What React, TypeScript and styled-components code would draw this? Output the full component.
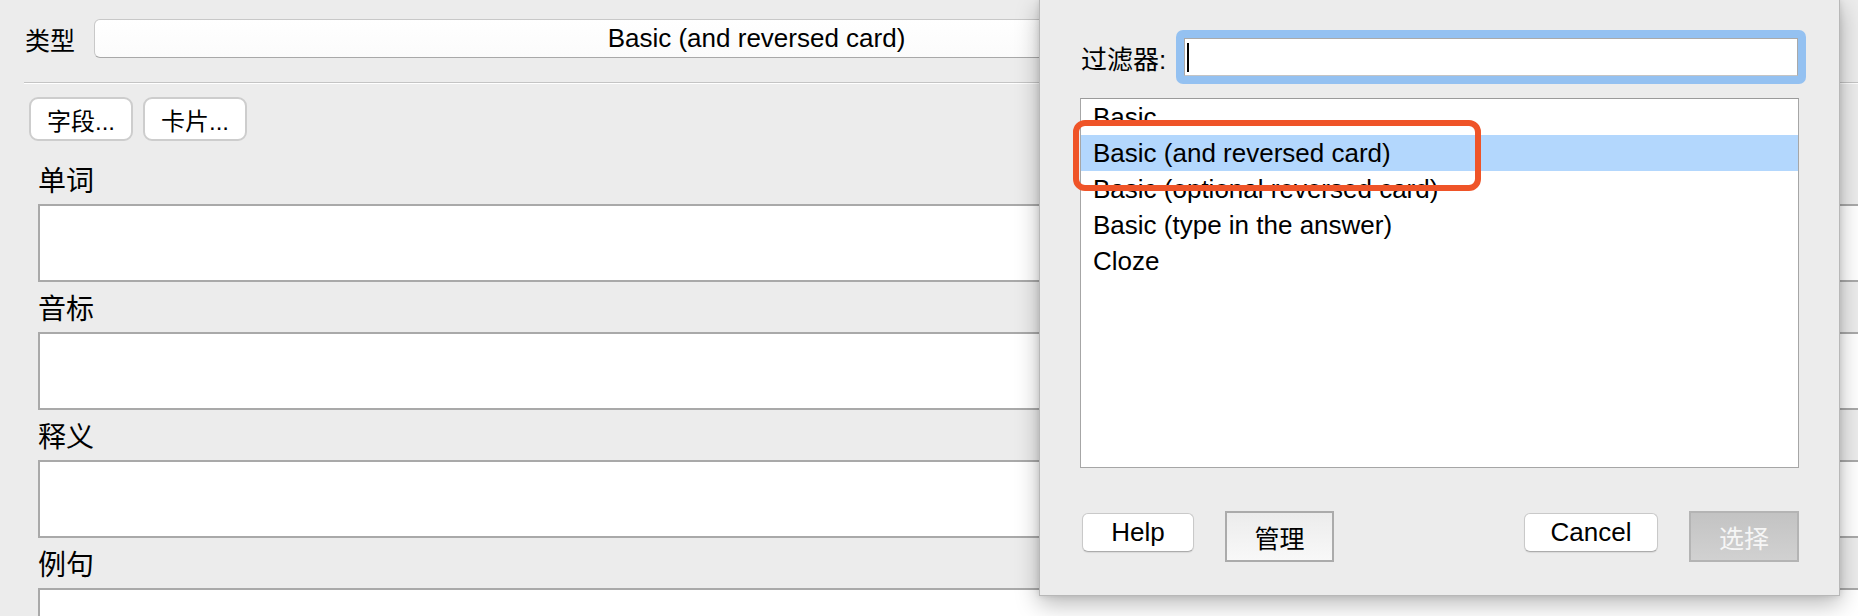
import { createGlobalStyle, styled } from 'styled-components';

const GlobalStyle = createGlobalStyle`
  html, body {
    margin: 0;
    padding: 0;
  }
  body {
    background: #ececec;
    color: #000;
    font-family: "Liberation Sans", "Noto Sans CJK SC", sans-serif;
  }
`;

const fields = ['单词', '音标', '释义', '例句'];

const noteTypes = [
  'Basic',
  'Basic (and reversed card)',
  'Basic (optional reversed card)',
  'Basic (type in the answer)',
  'Cloze',
];

export default function App() {
  return (
    <Screen>
      <GlobalStyle />
      <Editor>
        <TypeRow>
          <TypeLabel>类型</TypeLabel>
          <Combo>Basic (and reversed card)</Combo>
        </TypeRow>
        <Separator />
        <ButtonRow>
          <ToolButton>字段...</ToolButton>
          <ToolButton>卡片...</ToolButton>
        </ButtonRow>
        <Fields>
          {fields.map((name) => (
            <div key={name}>
              <FieldLabel>{name}</FieldLabel>
              <FieldBox />
            </div>
          ))}
        </Fields>
      </Editor>

      <Dialog>
        <FilterRow>
          <FilterLabel>过滤器:</FilterLabel>
          <FocusRing>
            <FilterInput>
              <Caret />
            </FilterInput>
          </FocusRing>
        </FilterRow>
        <List>
          {noteTypes.map((name, i) => (
            <Row key={name} $selected={i === 1}>
              {name}
            </Row>
          ))}
        </List>
        <Footer>
          <PushButton $width={112} $left={2}>
            Help
          </PushButton>
          <SquareButton $width={109} $left={31}>
            管理
          </SquareButton>
          <Spacer />
          <PushButton $width={134} $left={0}>
            Cancel
          </PushButton>
          <SquareButton $width={110} $left={31} $disabled>
            选择
          </SquareButton>
        </Footer>
        <Highlight />
      </Dialog>
    </Screen>
  );
}

const Screen = styled.div`
  position: relative;
  width: 1858px;
  height: 616px;
  overflow: hidden;
  background: #ececec;
`;

const Editor = styled.div`
  display: flex;
  flex-direction: column;
  padding-top: 19px;
`;

const TypeRow = styled.div`
  display: flex;
  align-items: center;
  gap: 19px;
  padding-left: 25px;
`;

const TypeLabel = styled.span`
  width: 50px;
  font-size: 25px;
`;

const Combo = styled.div`
  box-sizing: border-box;
  width: 1325px;
  height: 39px;
  display: flex;
  align-items: center;
  justify-content: center;
  font-size: 26px;
  background: linear-gradient(#ffffff, #fbfbfb);
  border: 1px solid #c8c8c8;
  border-bottom-color: #a8a8a8;
  border-radius: 6px;
`;

const Separator = styled.div`
  margin: 24px 0 0 24px;
  height: 1px;
  background: #c4c4c4;
  border-bottom: 1px solid #ffffff;
`;

const ButtonRow = styled.div`
  display: flex;
  gap: 10px;
  margin-top: 13px;
  padding-left: 29px;
`;

const ToolButton = styled.div`
  box-sizing: border-box;
  width: 104px;
  height: 44px;
  display: flex;
  align-items: center;
  justify-content: center;
  font-size: 24px;
  background: #ffffff;
  border: 2px solid #cdcdcd;
  border-radius: 9px;
`;

const Fields = styled.div`
  margin: 13px -20px 0 0;
  padding-left: 38px;
`;

const FieldLabel = styled.div`
  height: 50px;
  display: flex;
  align-items: center;
  font-size: 28px;
`;

const FieldBox = styled.div`
  box-sizing: border-box;
  height: 78px;
  background: #ffffff;
  border: 2px solid #a9a9a9;
`;

const Dialog = styled.div`
  position: absolute;
  left: 1039px;
  top: 0;
  box-sizing: border-box;
  width: 801px;
  height: 596px;
  padding: 0 40px;
  display: flex;
  flex-direction: column;
  background: #ececec;
  border: 1px solid #b8b8b8;
  border-top: none;
  box-shadow: 0 8px 22px rgba(0, 0, 0, 0.28), 0 0 6px rgba(0, 0, 0, 0.12);
`;

const FilterRow = styled.div`
  display: flex;
  align-items: center;
  margin-top: 30px;
`;

const FilterLabel = styled.span`
  flex: none;
  width: 95px;
  padding-left: 1px;
  font-size: 26px;
`;

const FocusRing = styled.div`
  flex: 1;
  margin-right: -7px;
  padding: 8px;
  background: #94c1f1;
  border-radius: 7px;
`;

const FilterInput = styled.div`
  box-sizing: border-box;
  height: 38px;
  display: flex;
  align-items: center;
  background: #ffffff;
  border: 1px solid #a9a9a9;
  border-bottom-color: #c4c4c4;
`;

const Caret = styled.span`
  width: 2px;
  height: 29px;
  margin-left: 2px;
  background: #000;
`;

const List = styled.div`
  box-sizing: border-box;
  height: 370px;
  margin-top: 14px;
  background: #ffffff;
  border: 1px solid #a6a6a6;
  border-top-color: #9a9a9a;
`;

const Row = styled.div<{ $selected?: boolean }>`
  height: 36px;
  line-height: 36px;
  padding-left: 12px;
  font-size: 26px;
  white-space: nowrap;
  background: ${(p) => (p.$selected ? '#b3d7fd' : 'transparent')};
`;

const Footer = styled.div`
  display: flex;
  align-items: flex-start;
  margin-top: 43px;
`;

const Spacer = styled.div`
  flex: 1;
`;

const PushButton = styled.div<{ $width: number; $left: number }>`
  box-sizing: border-box;
  width: ${(p) => p.$width}px;
  height: 39px;
  margin: 2px 0 0 ${(p) => p.$left}px;
  display: flex;
  align-items: center;
  justify-content: center;
  font-size: 26px;
  background: #ffffff;
  border: 1px solid #c9c9c9;
  border-bottom-color: #acacac;
  border-radius: 6px;
  box-shadow: 0 1px 1px rgba(0, 0, 0, 0.08);
`;

const SquareButton = styled.div<{ $width: number; $left: number; $disabled?: boolean }>`
  box-sizing: border-box;
  width: ${(p) => p.$width}px;
  height: 51px;
  margin-left: ${(p) => p.$left}px;
  display: flex;
  align-items: center;
  justify-content: center;
  font-size: 25px;
  color: ${(p) => (p.$disabled ? '#f6f6f6' : '#000')};
  background: ${(p) =>
    p.$disabled
      ? 'linear-gradient(#c3c3c3, #d1d1d1)'
      : 'linear-gradient(#ececec, #f8f8f8)'};
  border: 2px solid ${(p) => (p.$disabled ? '#b4b4b4' : '#ababab')};
`;

const Highlight = styled.div`
  position: absolute;
  left: 33px;
  top: 120px;
  box-sizing: border-box;
  width: 408px;
  height: 71px;
  border: 6px solid #ef5428;
  border-radius: 12px;
  pointer-events: none;
`;
